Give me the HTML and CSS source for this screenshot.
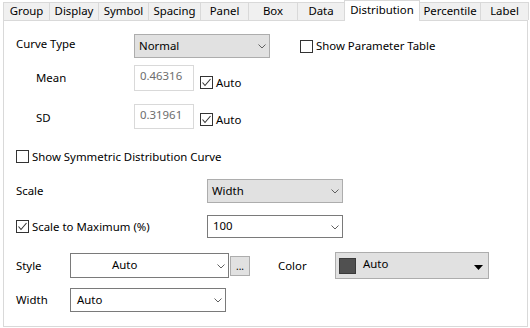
FILE: index.html
```html
<!DOCTYPE html>
<html>
<head>
<meta charset="utf-8">
<link rel="stylesheet" href="styles.css">
</head>
<body>
<div class="tabs">
  <div class="tab">Group</div>
  <div class="tab">Display</div>
  <div class="tab">Symbol</div>
  <div class="tab">Spacing</div>
  <div class="tab">Panel</div>
  <div class="tab">Box</div>
  <div class="tab">Data</div>
  <div class="tab active">Distribution</div>
  <div class="tab">Percentile</div>
  <div class="tab last">Label</div>
</div>
<div class="panel">
  <div class="row r-curve">
    <div class="lbl w118 up">Curve Type</div>
    <div class="sel gray w136"><span class="val">Normal</span><svg class="chev" width="8" height="5" viewBox="0 0 8 5"><polyline points="0.5,0.5 4,4 7.5,0.5" fill="none" stroke="#606060" stroke-width="1"/></svg></div>
    <label class="chk ml30"><span class="box"></span><span>Show Parameter Table</span></label>
  </div>
  <div class="row r-mean">
    <div class="lbl w118 indent">Mean</div>
    <div class="inp">0.46316</div>
    <label class="chk ml6 down"><span class="box"><svg width="11" height="11" viewBox="0 0 11 11"><polyline points="1.5,5.5 4,8.5 9.5,2" fill="none" stroke="#333" stroke-width="1.1"/></svg></span><span>Auto</span></label>
  </div>
  <div class="row r-sd">
    <div class="lbl w118 indent">SD</div>
    <div class="inp">0.31961</div>
    <label class="chk ml6 down"><span class="box"><svg width="11" height="11" viewBox="0 0 11 11"><polyline points="1.5,5.5 4,8.5 9.5,2" fill="none" stroke="#333" stroke-width="1.1"/></svg></span><span>Auto</span></label>
  </div>
  <div class="row r-sym">
    <label class="chk"><span class="box"></span><span>Show Symmetric Distribution Curve</span></label>
  </div>
  <div class="row r-scale">
    <div class="lbl w191">Scale</div>
    <div class="sel gray w136"><span class="val">Width</span><svg class="chev" width="8" height="5" viewBox="0 0 8 5"><polyline points="0.5,0.5 4,4 7.5,0.5" fill="none" stroke="#606060" stroke-width="1"/></svg></div>
  </div>
  <div class="row r-max">
    <label class="chk w191"><span class="box"><svg width="11" height="11" viewBox="0 0 11 11"><polyline points="1.5,5.5 4,8.5 9.5,2" fill="none" stroke="#333" stroke-width="1.1"/></svg></span><span>Scale to Maximum (%)</span></label>
    <div class="sel white w136"><span class="val">100</span><svg class="chev" width="8" height="5" viewBox="0 0 8 5"><polyline points="0.5,0.5 4,4 7.5,0.5" fill="none" stroke="#606060" stroke-width="1"/></svg></div>
  </div>
  <div class="row r-style">
    <div class="lbl w54">Style</div>
    <div class="sel white w159 h25"><span class="val centered">Auto</span><svg class="chev" width="8" height="5" viewBox="0 0 8 5"><polyline points="0.5,0.5 4,4 7.5,0.5" fill="none" stroke="#606060" stroke-width="1"/></svg></div>
    <div class="btn">...</div>
    <div class="lbl color-lbl">Color</div>
    <div class="colorsel"><span class="swatch"></span><span class="val">Auto</span><svg class="tri" width="9" height="5" viewBox="0 0 9 5"><polygon points="0,0 9,0 4.5,5" fill="#000"/></svg></div>
  </div>
  <div class="row r-width">
    <div class="lbl w54">Width</div>
    <div class="sel white w156"><span class="val">Auto</span><svg class="chev" width="8" height="5" viewBox="0 0 8 5"><polyline points="0.5,0.5 4,4 7.5,0.5" fill="none" stroke="#606060" stroke-width="1"/></svg></div>
  </div>
</div>
</body>
</html>
```
FILE: styles.css
```css
* { box-sizing: border-box; }
html, body { margin: 0; padding: 0; background: #fff; }
body {
  width: 530px;
  height: 328px;
  overflow: hidden;
  font-family: "Noto Sans", "Open Sans", sans-serif;
  font-size: 11.4px;
  color: #000;
}

.tabs {
  display: grid;
  grid-template-columns: 46px 49px 50px 52px 48px 49px 47px 76px 60px 49px;
  height: 20px;
  margin-left: 3px;
  align-items: end;
}
.tab {
  height: 18px;
  background: #f0f0f0;
  border: 1px solid #d9d9d9;
  border-right: none;
  border-bottom: none;
  display: flex;
  align-items: center;
  justify-content: center;
  line-height: 1;
  padding-bottom: 1px;
}
.tab.last { border-right: 1px solid #d9d9d9; }
.tab.active {
  height: 21px;
  align-self: start;
  background: #fff;
  border-right: 1px solid #d9d9d9;
  position: relative;
  z-index: 1;
  margin-bottom: -1px;
  padding-bottom: 2px;
}
.tab.active + .tab { border-left: none; }

.panel {
  margin-left: 3px;
  width: 525px;
  height: 307px;
  border: 1px solid #d9d9d9;
  padding-left: 12px;
  background: #fff;
}

.row { display: flex; align-items: center; }
.r-curve { margin-top: 13px; height: 24px; }
.r-mean { margin-top: 7px; height: 26px; align-items: flex-start; }
.r-sd { margin-top: 13px; height: 25px; align-items: flex-start; }
.r-sym { margin-top: 21px; height: 13px; }
.r-scale { margin-top: 16px; height: 24px; }
.r-max { margin-top: 12px; height: 23px; }
.r-style { margin-top: 14px; height: 27px; }
.r-width { margin-top: 9px; height: 24px; }

.lbl { line-height: 1; white-space: nowrap; }
.up { padding-bottom: 4px; }
.w118 { width: 118px; }
.w191 { width: 191px; }
.w54 { width: 54px; }
.indent { padding-left: 20px; }
.r-mean .lbl, .r-sd .lbl { align-self: center; }
.r-sd .lbl { padding-top: 2px; }

.sel {
  position: relative;
  height: 100%;
  display: flex;
  align-items: center;
  line-height: 1;
}
.sel.gray { background: #e1e1e1; border: 1px solid #adadad; }
.sel.white { background: #fff; border: 1px solid #7a7a7a; }
.w136 { width: 136px; }
.w159 { width: 159px; }
.w156 { width: 156px; }
.h25 { height: 25px; }
.sel .val { padding-left: 4px; padding-bottom: 1px; }
.sel .val.centered { padding-left: 41px; }
.r-width .sel .val { padding-left: 6px; }
.r-max .sel .val { padding-left: 5px; }
.chev { position: absolute; right: 3px; top: 50%; margin-top: -2px; }

.inp {
  width: 60px;
  height: 100%;
  border: 1px solid #d9d9d9;
  color: #6d6d6d;
  padding-left: 5px;
  padding-top: 4px;
  line-height: 1;
}

.chk { display: flex; align-items: center; line-height: 1; white-space: nowrap; }
.chk .box {
  width: 13px;
  height: 13px;
  border: 1px solid #333;
  background: #fff;
  margin-right: 3px;
  display: flex;
  align-items: center;
  justify-content: center;
  flex: none;
}
.chk .box svg { display: block; }
.ml30 { margin-left: 30px; }
.ml6 { margin-left: 6px; }
.down { margin-top: 11px; }
.r-sd .down { margin-top: 9px; }

.btn {
  width: 20px;
  height: 20px;
  margin-left: 1px;
  background: #e1e1e1;
  border: 1px solid #adadad;
  font-size: 10px;
  line-height: 1;
  display: flex;
  justify-content: center;
  align-items: flex-end;
  padding-bottom: 4px;
}
.color-lbl { margin-left: 28px; width: 57px; }
.colorsel {
  position: relative;
  width: 154px;
  height: 27px;
  background: #e1e1e1;
  border: 1px solid #adadad;
  display: flex;
  align-items: center;
  padding-left: 3px;
  line-height: 1;
}
.swatch {
  width: 17px;
  height: 16px;
  background: #505050;
  border: 1px solid #3a3a3a;
  margin-right: 7px;
}
.colorsel .val { padding-bottom: 3px; }
.tri { position: absolute; right: 5px; top: 12px; }
```
